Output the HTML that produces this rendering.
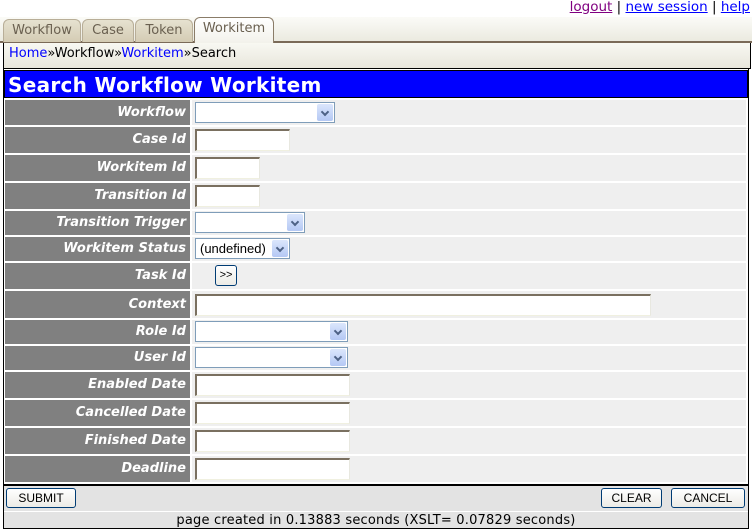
<!DOCTYPE html>
<html><head><style>
*{margin:0;padding:0;box-sizing:border-box}
body{width:752px;height:530px;background:#fff;position:relative;font-family:"DejaVu Sans","Liberation Sans",sans-serif;overflow:hidden}
.a{position:absolute}
.top{top:-1px;right:2px;font-size:13.5px;color:#000}
.top a{color:#00f;text-decoration:underline}
.tabbar{left:0;top:17px;width:752px;height:26px;background:linear-gradient(#fbfbf7,#ebeae0);border-bottom:2px solid #7a6a58}
.tab{top:19px;height:23px;background:linear-gradient(#e6e2d0,#d4ccb4);border:1px solid #b8ae98;border-bottom:none;border-radius:6px 6px 0 0;font-size:13px;color:#6a6050;text-align:center;line-height:22px}
.tab.on{top:17px;height:27px;background:linear-gradient(#fff,#f2f1ea);border-color:#8a7c68;color:#6a6050}
.crumb{left:3px;top:43px;width:748px;height:26px;background:linear-gradient(#f8f8f2,#e8e6dc);border-left:1px solid #000;border-right:1px solid #000;border-bottom:1px solid #000;font-size:13px;padding:3px 5px;color:#000}
.crumb a{color:#00f;text-decoration:none}
.frame{left:3px;top:69px;width:746px;height:460px;border:1px solid #000;border-top:none;background:#fff}
.title{left:4px;top:70px;width:744px;height:28px;background:#00f;border:1px solid #000;color:#fff;font-weight:bold;font-size:20px;padding:2px 3px;line-height:24px;letter-spacing:0.3px}
.lab{left:5px;width:185px;background:#808080;color:#fff;font-weight:bold;font-style:oblique;font-size:13px;text-align:right;padding-right:4px}
.val{left:192px;width:554px;background:#efefef}
.inp{background:#fff;border:1px solid #7a7060;border-right-color:#e8e8e0;border-bottom-color:#f0f0e0;border-left-width:2px;border-top-width:2px}
.sel{background:#fff;border:1px solid #7f9db9}
.sel i{position:absolute;right:1px;top:1px;bottom:1px;width:16px;background:linear-gradient(#dbe6fc,#b4c8f4);border-radius:2px}
.sel i:after{content:"";position:absolute;left:5px;top:5px;width:4px;height:4px;border-right:2px solid #4d6185;border-bottom:2px solid #4d6185;transform:rotate(45deg)}
.btn{border:1px solid #003c74;border-radius:3px;background:linear-gradient(#fff,#ecebe6);font-family:"Liberation Sans",sans-serif;font-size:12px;text-align:center;color:#000}
.bar{left:4px;top:484px;width:744px;height:27px;background:#e3e3e3;border-top:2px solid #000}
.foot{left:4px;top:511px;width:744px;height:17px;background:#e3e3e3;font-size:13px;text-align:center;line-height:17px;border-top:1px solid #fff;letter-spacing:0.2px}
</style></head><body>
<div class="a top"><a style="color:#800080">logout</a> | <a>new session</a> | <a>help</a></div>
<div class="a tabbar"></div>
<div class="a tab" style="left:3px;width:78px">Workflow</div>
<div class="a tab" style="left:82px;width:52px">Case</div>
<div class="a tab" style="left:135px;width:58px">Token</div>
<div class="a tab on" style="left:194px;width:80px">Workitem</div>
<div class="a crumb"><a>Home</a>»Workflow»<a>Workitem</a>»Search</div>
<div class="a frame"></div>
<div class="a title">Search Workflow Workitem</div>

<div class="a lab" style="top:100px;height:25px;line-height:25px">Workflow</div><div class="a val" style="top:100px;height:25px"></div>
<div class="a sel" style="left:195px;top:102px;width:140px;height:21px"><i></i></div>

<div class="a lab" style="top:127px;height:26px;line-height:26px">Case Id</div><div class="a val" style="top:127px;height:26px"></div>
<div class="a inp" style="left:195px;top:129px;width:95px;height:22px"></div>

<div class="a lab" style="top:155px;height:26px;line-height:26px">Workitem Id</div><div class="a val" style="top:155px;height:26px"></div>
<div class="a inp" style="left:195px;top:157px;width:65px;height:22px"></div>

<div class="a lab" style="top:183px;height:26px;line-height:26px">Transition Id</div><div class="a val" style="top:183px;height:26px"></div>
<div class="a inp" style="left:195px;top:185px;width:65px;height:22px"></div>

<div class="a lab" style="top:211px;height:24px;line-height:24px">Transition Trigger</div><div class="a val" style="top:211px;height:24px"></div>
<div class="a sel" style="left:195px;top:212px;width:110px;height:21px"><i></i></div>

<div class="a lab" style="top:237px;height:24px;line-height:24px">Workitem Status</div><div class="a val" style="top:237px;height:24px"></div>
<div class="a sel" style="left:195px;top:238px;width:95px;height:21px;font-family:'Liberation Sans',sans-serif;font-size:13px;padding-left:4px;line-height:19px">(undefined)<i></i></div>

<div class="a lab" style="top:263px;height:26px;line-height:26px">Task Id</div><div class="a val" style="top:263px;height:26px"></div>
<div class="a btn" style="left:215px;top:265px;width:22px;height:21px;line-height:19px;font-size:11px">&gt;&gt;</div>

<div class="a lab" style="top:291px;height:27px;line-height:27px">Context</div><div class="a val" style="top:291px;height:27px"></div>
<div class="a inp" style="left:195px;top:294px;width:456px;height:22px"></div>

<div class="a lab" style="top:320px;height:24px;line-height:24px">Role Id</div><div class="a val" style="top:320px;height:24px"></div>
<div class="a sel" style="left:195px;top:321px;width:153px;height:21px"><i></i></div>

<div class="a lab" style="top:346px;height:24px;line-height:24px">User Id</div><div class="a val" style="top:346px;height:24px"></div>
<div class="a sel" style="left:195px;top:347px;width:153px;height:21px"><i></i></div>

<div class="a lab" style="top:372px;height:26px;line-height:26px">Enabled Date</div><div class="a val" style="top:372px;height:26px"></div>
<div class="a inp" style="left:195px;top:374px;width:155px;height:22px"></div>

<div class="a lab" style="top:400px;height:26px;line-height:26px">Cancelled Date</div><div class="a val" style="top:400px;height:26px"></div>
<div class="a inp" style="left:195px;top:402px;width:155px;height:22px"></div>

<div class="a lab" style="top:428px;height:26px;line-height:26px">Finished Date</div><div class="a val" style="top:428px;height:26px"></div>
<div class="a inp" style="left:195px;top:430px;width:155px;height:22px"></div>

<div class="a lab" style="top:456px;height:26px;line-height:26px">Deadline</div><div class="a val" style="top:456px;height:26px"></div>
<div class="a inp" style="left:195px;top:458px;width:155px;height:22px"></div>

<div class="a bar"></div>
<div class="a btn" style="left:6px;top:488px;width:70px;height:20px;line-height:18px">SUBMIT</div>
<div class="a btn" style="left:601px;top:488px;width:61px;height:20px;line-height:18px">CLEAR</div>
<div class="a btn" style="left:671px;top:488px;width:74px;height:20px;line-height:18px">CANCEL</div>
<div class="a foot">page created in 0.13883 seconds (XSLT= 0.07829 seconds)</div>
</body></html>
